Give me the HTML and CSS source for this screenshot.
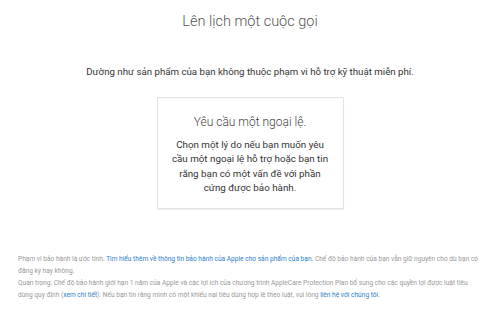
FILE: index.html
```html
<!DOCTYPE html>
<html lang="vi">
<head>
    <meta charset="UTF-8">
    <title>Lên lịch một cuộc gọi</title>
    <link rel="stylesheet" href="styles.css">
</head>
<body>
    <div class="page">
        <h1 class="title">Lên lịch một cuộc gọi</h1>
        <p class="lead">Dường như sản phẩm của bạn không thuộc phạm vi hỗ trợ kỹ thuật miễn phí.</p>
        <div class="card">
            <h2 class="card-title">Yêu cầu một ngoại lệ.</h2>
            <p class="card-text">Chọn một lý do nếu bạn muốn yêu cầu một ngoại lệ hỗ trợ hoặc bạn tin rằng bạn có một vấn đề với phần cứng được bảo hành.</p>
        </div>
        <div class="notes">
            <p>Phạm vi bảo hành là ước tính. <a href="#">Tìm hiểu thêm về thông tin bảo hành của Apple cho sản phẩm của bạn.</a> Chế độ bảo hành của bạn vẫn giữ nguyên cho dù bạn có đăng ký hay không.</p>
            <p>Quan trọng: Chế độ bảo hành giới hạn 1 năm của Apple và các lợi ích của chương trình AppleCare Protection Plan bổ sung cho các quyền lợi được luật tiêu dùng quy định (<a href="#">xem chi tiết</a>). Nếu bạn tin rằng mình có một khiếu nại tiêu dùng hợp lệ theo luật, vui lòng <a href="#">liên hệ với chúng tôi</a>.</p>
        </div>
    </div>
</body>
</html>
```

FILE: styles.css
```css
*{
    margin: 0;
    padding: 0;
}
body{
    background-color: #fff;
    font-family: Roboto, "Open Sans", sans-serif;
    color: #333;
}
.page{
    width: 500px;
    height: 315px;
    display: flex;
    flex-direction: column;
    align-items: center;
}
.title{
    margin-top: 12px;
    font-size: 14.5px;
    font-weight: 300;
    color: #555;
    line-height: 20px;
}
.lead{
    margin-top: 33px;
    font-size: 9.7px;
    line-height: 14px;
    color: #333;
}
.card{
    margin-top: 18px;
    width: 185px;
    height: 110px;
    border: 1px solid #e3e3e3;
    box-shadow: 0 1px 1px rgba(0,0,0,.05);
    text-align: center;
    box-sizing: content-box;
}
.card-title{
    margin-top: 16px;
    font-size: 12px;
    font-weight: 300;
    color: #444;
    line-height: 16px;
}
.card-text{
    margin: 8px 14px 0;
    font-size: 9.8px;
    line-height: 14.3px;
    color: #333;
}
.notes{
    align-self: stretch;
    margin: 44px 18px 0;
    font-size: 6.6px;
    line-height: 12px;
    color: #999;
}
.notes a{
    color: #2a7fc9;
    text-decoration: none;
}
```
